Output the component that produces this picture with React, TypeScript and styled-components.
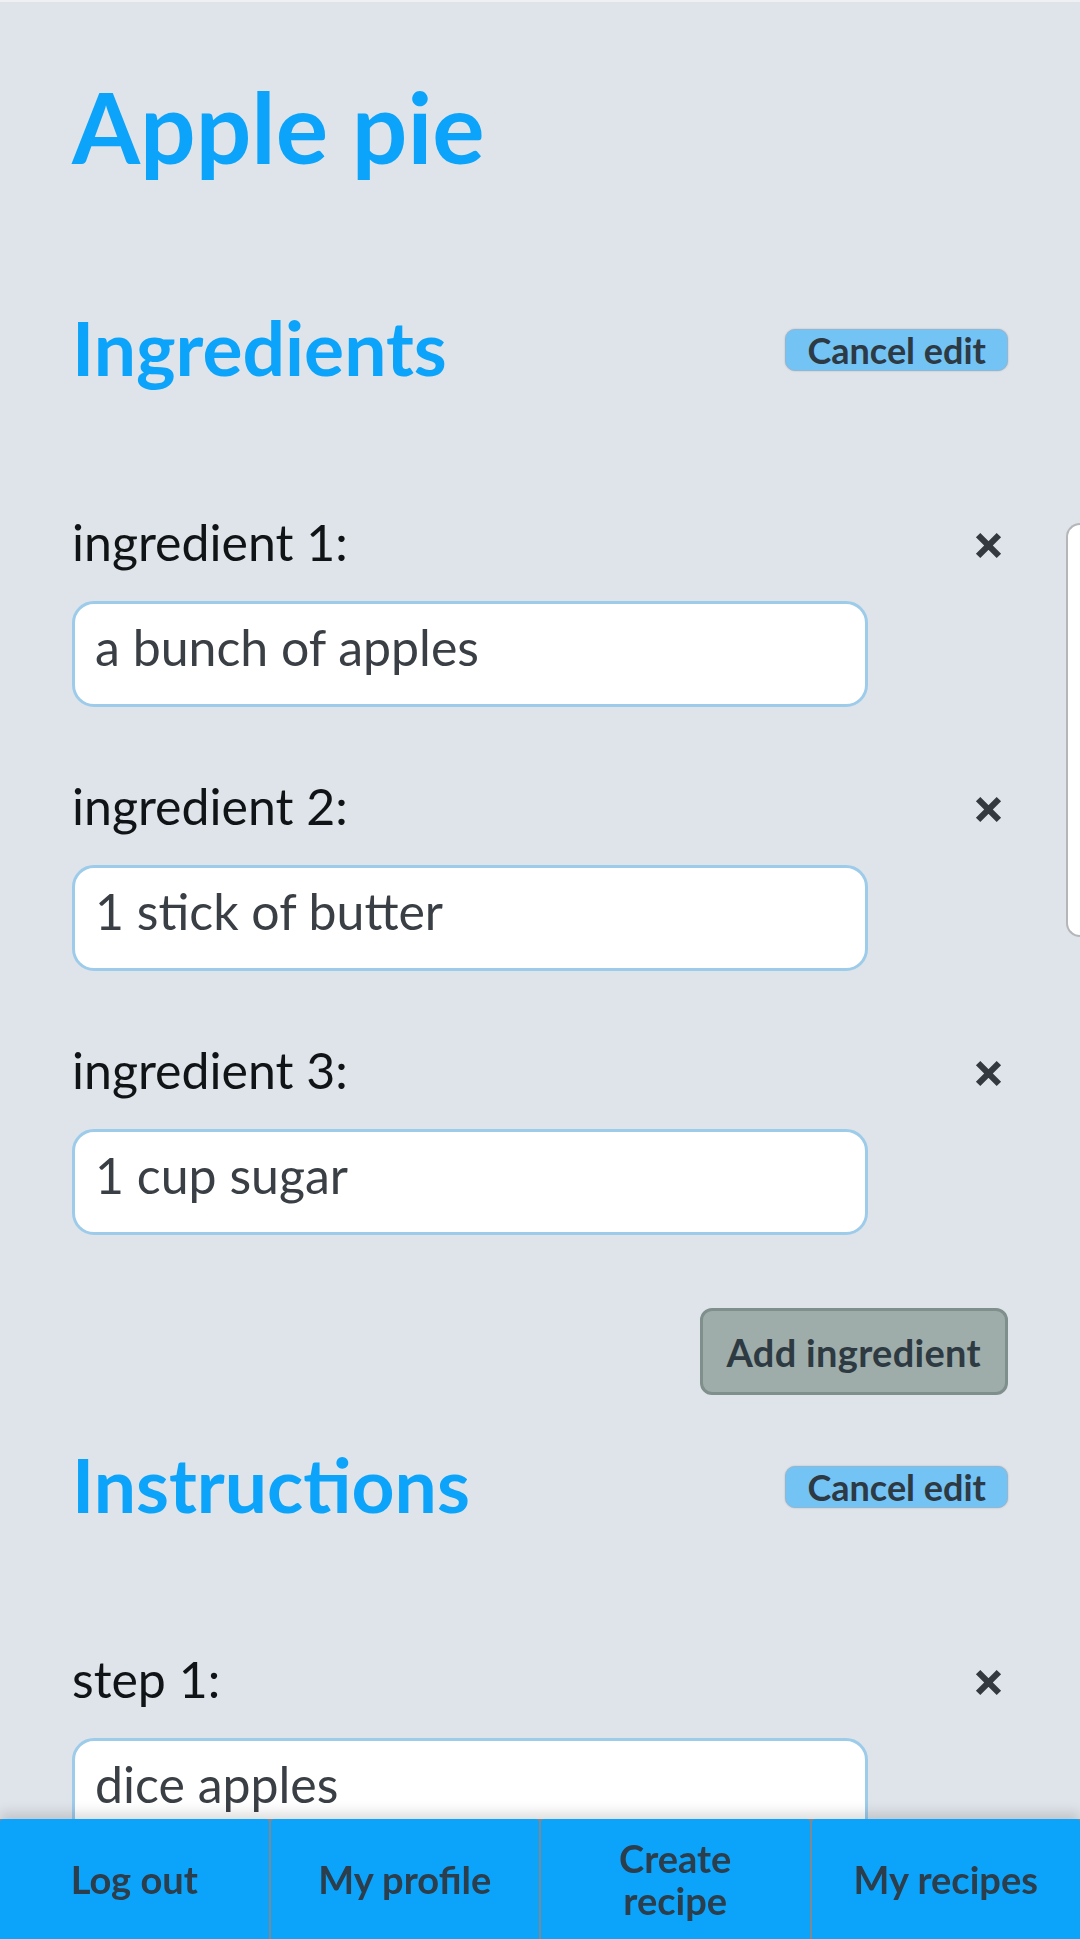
import React from 'react';
import styled, { createGlobalStyle } from 'styled-components';

const GlobalStyle = createGlobalStyle`
    html, body {
        margin: 0;
        padding: 0;
        background: #dfe4ea;
        overflow-x: hidden;
    }

    * {
        box-sizing: border-box;
    }
`;

const Page = styled.main`
    font-family: Lato, 'Open Sans', sans-serif;
    background: #dfe4ea;
    border-top: 2px solid #eef0f3;
    padding: 68px 72px 90px;
`;

const Title = styled.h1`
    margin: 0;
    color: #0ca4fa;
    font-size: 98px;
    font-weight: 700;
    line-height: 113px;
`;

const Section = styled.section<{ $gap: number }>`
    margin-top: ${(p) => p.$gap}px;
`;

const SectionHeader = styled.div`
    display: flex;
    align-items: center;
    justify-content: space-between;
`;

const Heading = styled.h2`
    margin: 0;
    color: #0ca4fa;
    font-size: 75px;
    font-weight: 700;
    line-height: 86px;
`;

const CancelButton = styled.button`
    font-family: inherit;
    font-size: 36px;
    font-weight: 700;
    line-height: 36px;
    color: #2d3943;
    background: #74c3f5;
    border: 1px solid #8fb8d4;
    border-radius: 10px;
    box-shadow: 0 0 2px rgba(0, 0, 0, 0.2);
    height: 42px;
    padding: 0 21px;
    margin-top: 6px;
`;

const FieldList = styled.div`
    display: flex;
    flex-direction: column;
    gap: 69px;
    margin-top: 122px;
`;

const Field = styled.div`
    display: flex;
    flex-direction: column;
    gap: 29px;
`;

const FieldHeader = styled.div`
    display: flex;
    align-items: center;
    justify-content: space-between;
`;

const Label = styled.label`
    font-size: 50px;
    line-height: 60px;
    color: #111417;
`;

const RemoveButton = styled.button`
    display: flex;
    background: none;
    border: none;
    padding: 6px;
    margin-top: 6px;
    color: #33393e;
`;

const TextInput = styled.input`
    display: block;
    width: 796px;
    height: 106px;
    padding: 0 20px 14px;
    font-family: inherit;
    font-size: 50px;
    color: #3a3f45;
    background: #fff;
    border: 3px solid #9dcbea;
    border-radius: 22px;
    outline: none;
`;

const AddRow = styled.div`
    display: flex;
    justify-content: flex-end;
    margin-top: 73px;
`;

const AddButton = styled.button`
    font-family: inherit;
    font-size: 38px;
    font-weight: 700;
    color: #2e3a42;
    background: #9fadaa;
    border: 3px solid #7f8f8b;
    border-radius: 12px;
    height: 87px;
    padding: 0 24px;
    letter-spacing: 0.3px;
`;

const SidePeek = styled.div`
    position: fixed;
    top: 523px;
    right: 0;
    width: 14px;
    height: 414px;
    background: #fff;
    border: 2px solid #b4b6b8;
    border-right: none;
    border-radius: 18px 0 0 18px;
`;

const Nav = styled.nav`
    position: fixed;
    left: 0;
    right: 0;
    bottom: 0;
    height: 120px;
    display: grid;
    grid-template-columns: repeat(4, 1fr);
    gap: 2px;
    background: #7d8a94;
    box-shadow: 0 -6px 12px rgba(0, 0, 0, 0.14);
    font-family: Lato, 'Open Sans', sans-serif;
`;

const NavButton = styled.button`
    font-family: inherit;
    font-size: 38px;
    font-weight: 700;
    line-height: 42px;
    color: #2c3d4b;
    background: #0ca4fb;
    border: none;
    border-radius: 4px 4px 0 0;
    padding: 0 24px;
`;

const CloseIcon = () => (
    <svg width='27' height='27' viewBox='0 0 26 26'>
        <path d='M3 3 L23 23 M23 3 L3 23' stroke='currentColor' strokeWidth='6' fill='none' />
    </svg>
);

const ingredients = ['a bunch of apples', '1 stick of butter', '1 cup sugar'];
const steps = ['dice apples'];

const App = () => {
    return (
        <>
            <GlobalStyle />
            <Page>
                <Title>Apple pie</Title>

                <Section $gap={121}>
                    <SectionHeader>
                        <Heading>Ingredients</Heading>
                        <CancelButton>Cancel edit</CancelButton>
                    </SectionHeader>
                    <FieldList>
                        {ingredients.map((item, i) => (
                            <Field key={i}>
                                <FieldHeader>
                                    <Label htmlFor={`ingredient-${i}`}>ingredient {i + 1}:</Label>
                                    <RemoveButton aria-label='remove'>
                                        <CloseIcon />
                                    </RemoveButton>
                                </FieldHeader>
                                <TextInput id={`ingredient-${i}`} defaultValue={item} />
                            </Field>
                        ))}
                    </FieldList>
                    <AddRow>
                        <AddButton>Add ingredient</AddButton>
                    </AddRow>
                </Section>

                <Section $gap={46}>
                    <SectionHeader>
                        <Heading>Instructions</Heading>
                        <CancelButton>Cancel edit</CancelButton>
                    </SectionHeader>
                    <FieldList>
                        {steps.map((item, i) => (
                            <Field key={i}>
                                <FieldHeader>
                                    <Label htmlFor={`step-${i}`}>step {i + 1}:</Label>
                                    <RemoveButton aria-label='remove'>
                                        <CloseIcon />
                                    </RemoveButton>
                                </FieldHeader>
                                <TextInput id={`step-${i}`} defaultValue={item} />
                            </Field>
                        ))}
                    </FieldList>
                </Section>
            </Page>

            <SidePeek />

            <Nav>
                <NavButton>Log out</NavButton>
                <NavButton>My profile</NavButton>
                <NavButton>Create recipe</NavButton>
                <NavButton>My recipes</NavButton>
            </Nav>
        </>
    );
};

export default App;
